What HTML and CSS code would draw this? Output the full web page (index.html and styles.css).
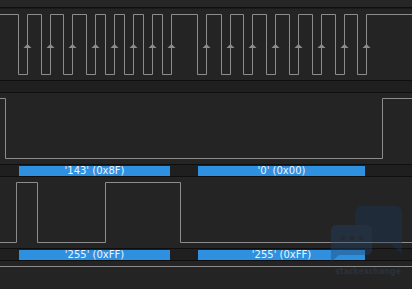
FILE: index.html
```html
<!DOCTYPE html>
<html>
<head>
<meta charset="utf-8">
<link rel="stylesheet" href="styles.css">
</head>
<body>
<div class="view">
  <div class="band-top"></div>
  <div class="sep"></div>
  <div class="sep sep-soft"></div>

  <div class="chan">
    <svg class="wave" width="412" height="71" viewBox="0 0 412 71">
      <polyline class="sig" points="0,5.5 18.5,5.5 18.5,65.5 27.5,65.5 27.5,5.5 41.5,5.5 41.5,65.5 50.5,65.5 50.5,5.5 63.5,5.5 63.5,65.5 72.5,65.5 72.5,5.5 86.5,5.5 86.5,65.5 95.5,65.5 95.5,5.5 105.5,5.5 105.5,65.5 114.5,65.5 114.5,5.5 124.5,5.5 124.5,65.5 133.5,65.5 133.5,5.5 143.5,5.5 143.5,65.5 152.5,65.5 152.5,5.5 162.5,5.5 162.5,65.5 171.5,65.5 171.5,5.5 197.5,5.5 197.5,65.5 206.5,65.5 206.5,5.5 221.5,5.5 221.5,65.5 230.5,65.5 230.5,5.5 243.5,5.5 243.5,65.5 252.5,65.5 252.5,5.5 266.5,5.5 266.5,65.5 275.5,65.5 275.5,5.5 289.5,5.5 289.5,65.5 298.5,65.5 298.5,5.5 312.5,5.5 312.5,65.5 321.5,65.5 321.5,5.5 335.5,5.5 335.5,65.5 344.5,65.5 344.5,5.5 357.5,5.5 357.5,65.5 366.5,65.5 366.5,5.5 412,5.5"/>
      <g class="arrows">
        <polygon points="27.5,35 31.5,39 23.5,39"/>
        <polygon points="50.5,35 54.5,39 46.5,39"/>
        <polygon points="72.5,35 76.5,39 68.5,39"/>
        <polygon points="95.5,35 99.5,39 91.5,39"/>
        <polygon points="114.5,35 118.5,39 110.5,39"/>
        <polygon points="133.5,35 137.5,39 129.5,39"/>
        <polygon points="152.5,35 156.5,39 148.5,39"/>
        <polygon points="171.5,35 175.5,39 167.5,39"/>
        <polygon points="206.5,35 210.5,39 202.5,39"/>
        <polygon points="230.5,35 234.5,39 226.5,39"/>
        <polygon points="252.5,35 256.5,39 248.5,39"/>
        <polygon points="275.5,35 279.5,39 271.5,39"/>
        <polygon points="298.5,35 302.5,39 294.5,39"/>
        <polygon points="321.5,35 325.5,39 317.5,39"/>
        <polygon points="344.5,35 348.5,39 340.5,39"/>
        <polygon points="366.5,35 370.5,39 362.5,39"/>
      </g>
    </svg>
  </div>
  <div class="sep"></div>
  <div class="bars"></div>
  <div class="sep"></div>

  <div class="chan">
    <svg class="wave" width="412" height="71" viewBox="0 0 412 71">
      <polyline class="sig" points="0,5.5 5.5,5.5 5.5,65.5 382.5,65.5 382.5,5.5 412,5.5"/>
    </svg>
  </div>
  <div class="sep"></div>
  <div class="bars">
    <div class="bar" style="margin-left:19px;width:151px">'143' (0x8F)</div>
    <div class="bar" style="margin-left:28px;width:167px">'0' (0x00)</div>
  </div>
  <div class="sep"></div>

  <div class="chan">
    <svg class="wave" width="412" height="71" viewBox="0 0 412 71">
      <polyline class="sig" points="0,65.5 16.5,65.5 16.5,5.5 37.5,5.5 37.5,65.5 105.5,65.5 105.5,5.5 180.5,5.5 180.5,65.5 412,65.5"/>
    </svg>
  </div>
  <div class="sep"></div>
  <div class="bars">
    <div class="bar" style="margin-left:19px;width:151px">'255' (0xFF)</div>
    <div class="bar" style="margin-left:28px;width:167px">'255' (0xFF)</div>
  </div>
  <div class="sep"></div>

  <div class="chan chan-last">
    <svg class="wave" width="412" height="28" viewBox="0 0 412 28">
      <polyline class="sig" points="0,5.5 412,5.5"/>
    </svg>
  </div>

  <div class="watermark">
    <svg width="80" height="62" viewBox="0 0 80 62">
      <path class="wm-back" d="M35 6 h35 a6 6 0 0 1 6 6 v30 v12 l-11 -10 h-30 a6 6 0 0 1 -6 -6 v-26 a6 6 0 0 1 6 -6 z"/>
      <path class="wm-front" d="M10 25 h31 a5 5 0 0 1 5 5 v20 a5 5 0 0 1 -5 5 h-28 l-8 7 v-7 v-25 a5 5 0 0 1 5 -5 z"/>
      <circle class="wm-dot" cx="17" cy="38" r="2.5"/>
      <circle class="wm-dot" cx="26" cy="38" r="2.5"/>
      <circle class="wm-dot" cx="35" cy="38" r="2.5"/>
    </svg>
    <div class="wm-text">stackexchange</div>
  </div>
</div>
</body>
</html>
```

FILE: styles.css
```css
html, body {
  margin: 0;
  padding: 0;
  background: #232323;
}

.view {
  position: relative;
  width: 412px;
  height: 289px;
  overflow: hidden;
  display: flex;
  flex-direction: column;
  background: #232323;
  font-family: "DejaVu Sans", Verdana, sans-serif;
}

.band-top {
  height: 7px;
  background: #262626;
}

.sep {
  height: 1px;
  background: #0f0f0f;
  flex: none;
}

.sep-soft {
  background: #1a1a1a;
}

.chan {
  height: 71px;
  flex: none;
  background: #242424;
}

.chan-last {
  flex: 1;
}

.wave {
  display: block;
}

.sig {
  fill: none;
  stroke: #8c8c8c;
  stroke-width: 1;
}

.arrows polygon {
  fill: #8c8c8c;
}

.bars {
  height: 10px;
  padding-top: 1px;
  flex: none;
  display: flex;
  background: #1f1f1f;
}

.bar {
  height: 10px;
  background: #3090e0;
  color: #eef4fb;
  font-size: 10px;
  line-height: 10px;
  text-align: center;
  white-space: nowrap;
  overflow: hidden;
  flex: none;
}

.watermark {
  position: absolute;
  left: 326px;
  top: 200px;
  width: 86px;
  display: flex;
  flex-direction: column;
  align-items: flex-start;
  opacity: 0.4;
}

.wm-back {
  fill: #1a3656;
}

.wm-front {
  fill: #21436a;
}

.wm-dot {
  fill: #2a3442;
}

.wm-text {
  margin-top: 5px;
  margin-left: 9px;
  font-family: "DejaVu Sans", sans-serif;
  font-weight: bold;
  font-size: 8px;
  line-height: 10px;
  color: #33465e;
  letter-spacing: -0.1px;
}
```
